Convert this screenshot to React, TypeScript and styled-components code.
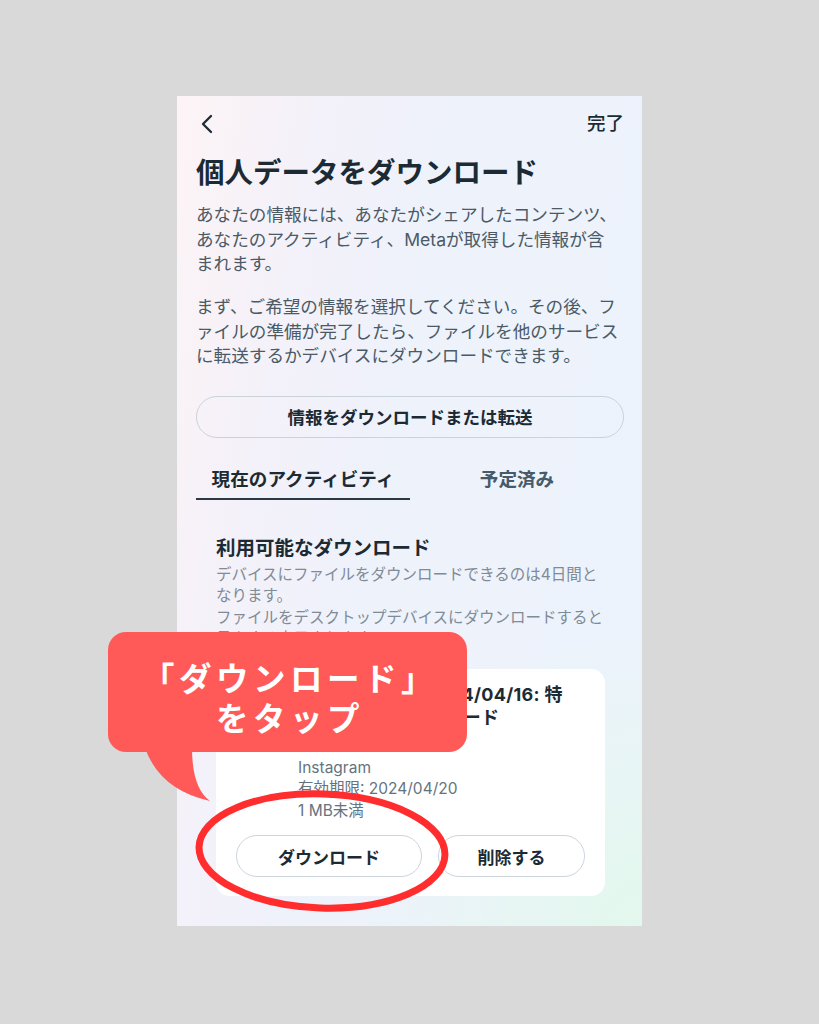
import React from "react";
import styled, { createGlobalStyle } from "styled-components";

const Global = createGlobalStyle`
  html, body { margin: 0; padding: 0; }
  body {
    background: #d9d9d9;
    font-family: Inter, "Noto Sans CJK JP", "Noto Sans", sans-serif;
  }
`;

const Page = styled.div`
  position: relative;
  width: 819px;
  height: 1024px;
  box-sizing: border-box;
  padding: 96px 0 0 177px;
  background: #d9d9d9;
  overflow: hidden;
`;

const Phone = styled.div`
  width: 465px;
  height: 830px;
  box-sizing: border-box;
  padding: 16px 18px 0 19px;
  display: flex;
  flex-direction: column;
  overflow: hidden;
  background:
    radial-gradient(ellipse 60% 35% at 100% 100%, rgba(226, 248, 236, 0.95), rgba(226, 248, 236, 0) 100%),
    linear-gradient(100deg, #fdf4f6 0%, #f4f1f9 22%, #eef2fb 45%, #ecf3fc 100%);
`;

const Header = styled.div`
  display: flex;
  align-items: center;
  justify-content: space-between;
  height: 24px;
`;

const BackIcon = styled.svg`
  margin-left: 4px;
  display: block;
`;

const Done = styled.span`
  font-size: 18.5px;
  line-height: 20px;
  margin-top: -3px;
  color: #1c2b33;
  font-weight: 500;
`;

const Title = styled.h1`
  margin: 19px 0 0;
  font-size: 28.5px;
  line-height: 36px;
  font-weight: 700;
  color: #1c2b33;
`;

const Para = styled.p<{ $gap: number }>`
  margin: ${(p) => p.$gap}px 0 0;
  font-size: 17.6px;
  line-height: 24.5px;
  color: #4a5a66;
`;

const WideButton = styled.button`
  margin-top: 27px;
  height: 42px;
  border: 1px solid #cbd3da;
  border-radius: 21px;
  background: transparent;
  font-family: inherit;
  font-size: 17.5px;
  font-weight: 700;
  color: #1c2b33;
  cursor: pointer;
`;

const Tabs = styled.div`
  margin-top: 20px;
  display: grid;
  grid-template-columns: 1fr 1fr;
`;

const Tab = styled.div<{ $active?: boolean }>`
  height: 40px;
  display: flex;
  align-items: center;
  justify-content: center;
  font-size: 18.6px;
  font-weight: 600;
  color: ${(p) => (p.$active ? "#1c2b33" : "#465a69")};
  border-bottom: 2px solid ${(p) => (p.$active ? "#2a3942" : "transparent")};
`;

const Section = styled.div`
  margin-top: 35px;
  padding: 0 19px 0 20px;
  display: flex;
  flex-direction: column;
`;

const SectionTitle = styled.h2`
  margin: 0;
  font-size: 19.5px;
  line-height: 26px;
  font-weight: 700;
  color: #1c2b33;
`;

const SectionText = styled.p`
  margin: 3px 0 0;
  font-size: 15.5px;
  line-height: 21.5px;
  color: #7f8b96;
`;

const Card = styled.div`
  margin-top: 19px;
  background: #ffffff;
  border-radius: 14px;
  padding: 14px 20px 19px;
  display: flex;
  flex-direction: column;
`;

const CardTitle = styled.div`
  margin-left: 62px;
  font-size: 18px;
  line-height: 23px;
  letter-spacing: 0.3px;
  font-weight: 700;
  color: #1c2b33;
  white-space: nowrap;
`;

const CardMeta = styled.div`
  margin: 28px 0 0 62px;
  font-size: 15.5px;
  line-height: 21.5px;
  color: #65737e;
`;

const ButtonRow = styled.div`
  margin-top: 14px;
  display: grid;
  grid-template-columns: 186px 1fr;
  gap: 16px;
`;

const PillButton = styled.button`
  height: 42px;
  border: 1px solid #cdd5dc;
  border-radius: 21px;
  background: #ffffff;
  font-family: inherit;
  font-size: 17px;
  font-weight: 700;
  color: #1c2b33;
  cursor: pointer;
`;

const Callout = styled.div`
  position: absolute;
  left: 108px;
  top: 632px;
  width: 359px;
`;

const Bubble = styled.div`
  position: relative;
  z-index: 1;
  height: 120px;
  box-sizing: border-box;
  padding: 25px 0 0 5px;
  border-radius: 18px;
  background: #ff5a57;
  color: #ffffff;
  text-align: center;
  font-family: "Noto Sans CJK JP", sans-serif;
  font-size: 32.5px;
  line-height: 40px;
  font-weight: 700;
  letter-spacing: 4.5px;
`;

const Tail = styled.svg`
  position: absolute;
  left: 35px;
  top: 114px;
  z-index: 0;
`;

const Ring = styled.svg`
  position: absolute;
  left: 191px;
  top: 785px;
  pointer-events: none;
`;

export default function App() {
  return (
    <>
      <Global />
      <Page>
        <Phone>
          <Header>
            <BackIcon width="14" height="20" viewBox="0 0 14 20">
              <path d="M11 2 L3 10 L11 18" fill="none" stroke="#1c2b33" strokeWidth="2.3" strokeLinecap="round" strokeLinejoin="round" />
            </BackIcon>
            <Done>完了</Done>
          </Header>
          <Title>個人データをダウンロード</Title>
          <Para $gap={12}>
            あなたの情報には、あなたがシェアしたコンテンツ、
            <br />
            あなたのアクティビティ、Metaが取得した情報が含
            <br />
            まれます。
          </Para>
          <Para $gap={18.5}>
            まず、ご希望の情報を選択してください。その後、フ
            <br />
            ァイルの準備が完了したら、ファイルを他のサービス
            <br />
            に転送するかデバイスにダウンロードできます。
          </Para>
          <WideButton>情報をダウンロードまたは転送</WideButton>
          <Tabs>
            <Tab $active>現在のアクティビティ</Tab>
            <Tab>予定済み</Tab>
          </Tabs>
          <Section>
            <SectionTitle>利用可能なダウンロード</SectionTitle>
            <SectionText>
              デバイスにファイルをダウンロードできるのは4日間と
              <br />
              なります。
              <br />
              ファイルをデスクトップデバイスにダウンロードすると
              <br />
              見やすく表示されます。
            </SectionText>
            <Card>
              <CardTitle>
                アカウント情報2024/04/16: 特
                <br />
                定の情報のダウンロード
              </CardTitle>
              <CardMeta>
                Instagram
                <br />
                有効期限: 2024/04/20
                <br />
                1 MB未満
              </CardMeta>
              <ButtonRow>
                <PillButton>ダウンロード</PillButton>
                <PillButton>削除する</PillButton>
              </ButtonRow>
            </Card>
          </Section>
        </Phone>

        <Callout>
          <Bubble>
            「ダウンロード」
            <br />
            をタップ
          </Bubble>
          <Tail width="72" height="60" viewBox="0 0 72 60">
            <path d="M2 2 Q17 44 67 55 Q49 42 49 2 Z" fill="#ff5a57" />
          </Tail>
        </Callout>

        <Ring width="264" height="132" viewBox="0 0 264 132">
          <ellipse cx="131" cy="66" rx="123" ry="57" fill="none" stroke="#ff2d2d" strokeWidth="7" transform="rotate(2 131 66)" />
        </Ring>
      </Page>
    </>
  );
}
